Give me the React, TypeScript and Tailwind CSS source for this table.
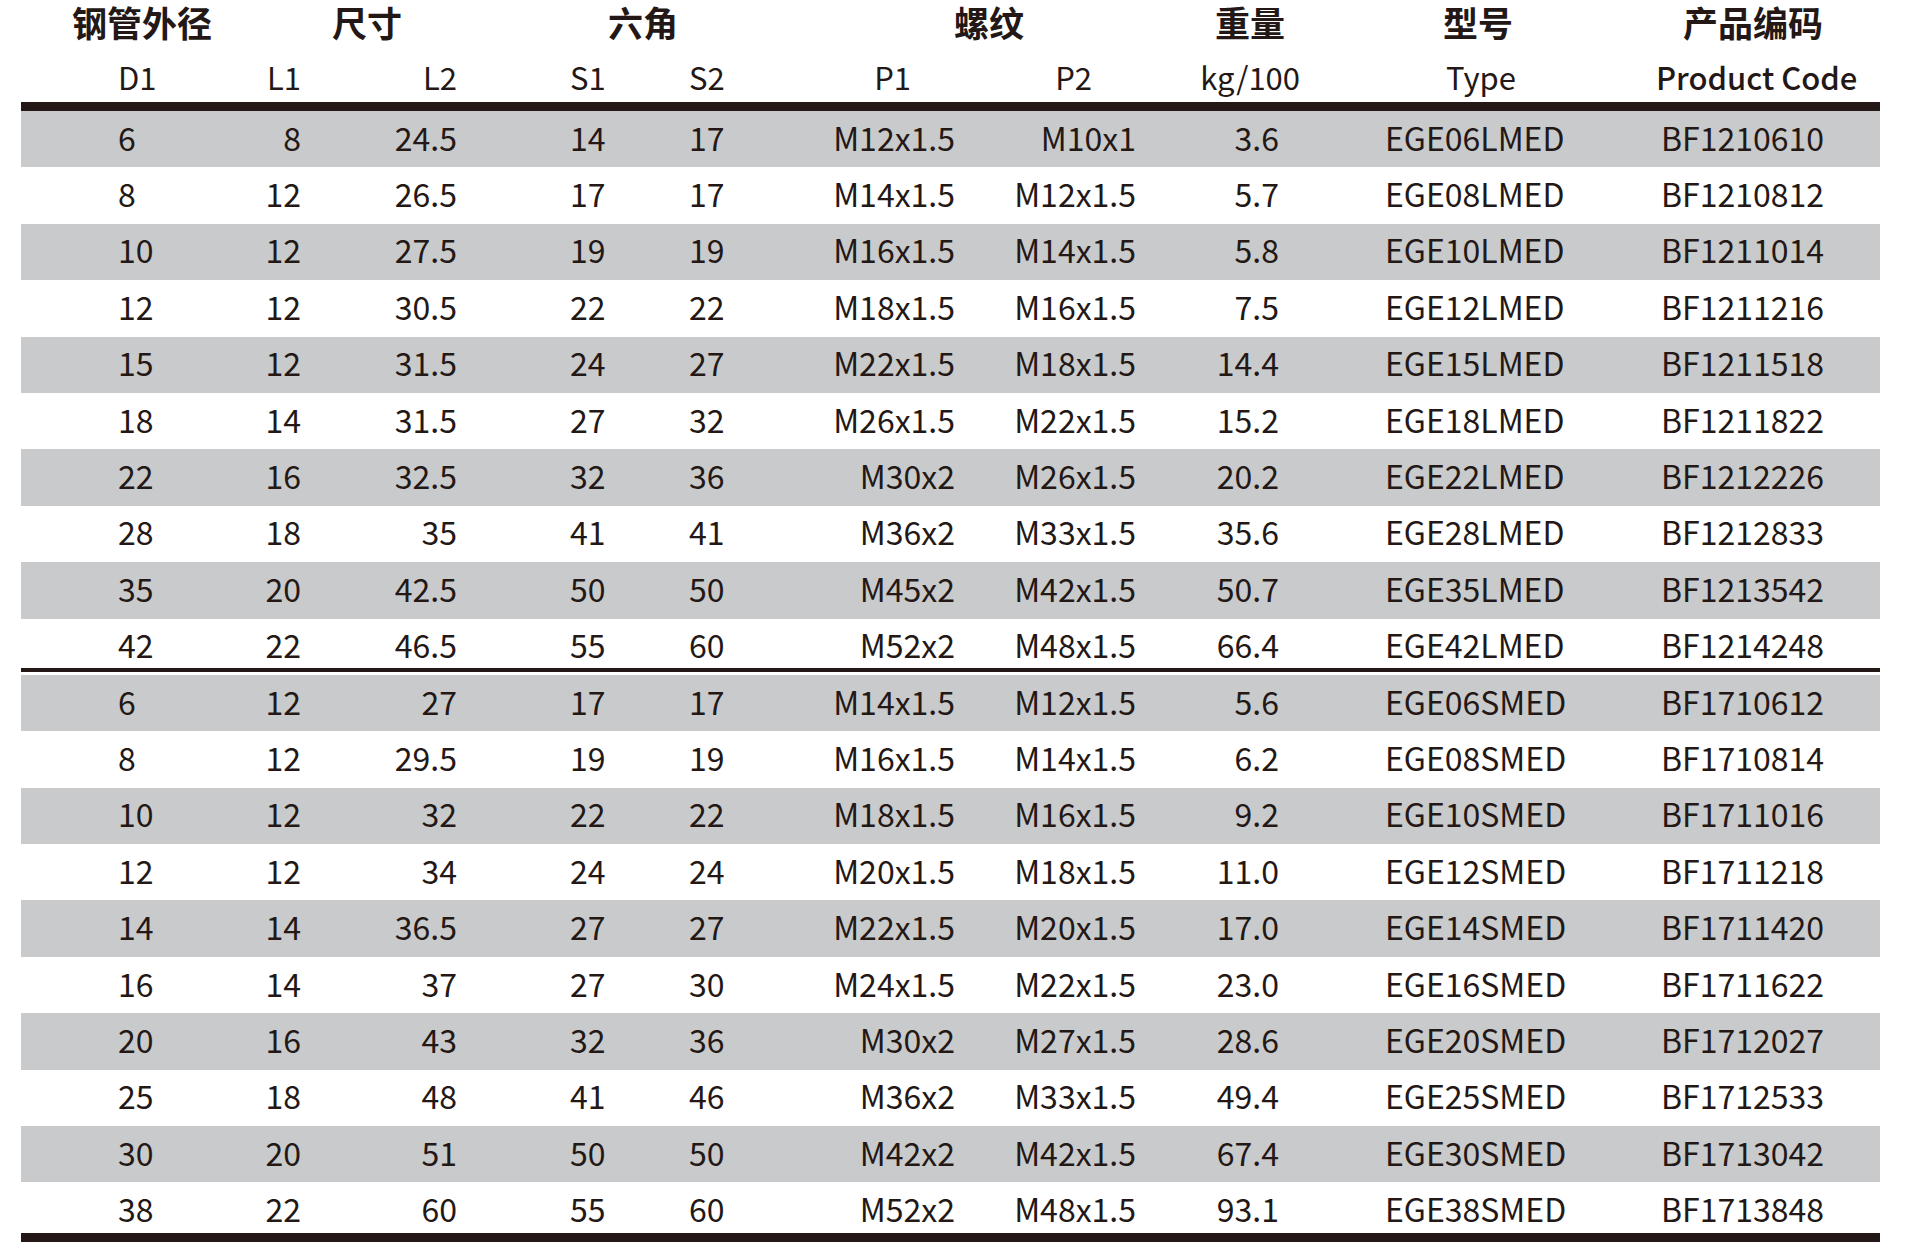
const rowsL = [
  ['6', '8', '24.5', '14', '17', 'M12x1.5', 'M10x1', '3.6', 'EGE06LMED', 'BF1210610'],
  ['8', '12', '26.5', '17', '17', 'M14x1.5', 'M12x1.5', '5.7', 'EGE08LMED', 'BF1210812'],
  ['10', '12', '27.5', '19', '19', 'M16x1.5', 'M14x1.5', '5.8', 'EGE10LMED', 'BF1211014'],
  ['12', '12', '30.5', '22', '22', 'M18x1.5', 'M16x1.5', '7.5', 'EGE12LMED', 'BF1211216'],
  ['15', '12', '31.5', '24', '27', 'M22x1.5', 'M18x1.5', '14.4', 'EGE15LMED', 'BF1211518'],
  ['18', '14', '31.5', '27', '32', 'M26x1.5', 'M22x1.5', '15.2', 'EGE18LMED', 'BF1211822'],
  ['22', '16', '32.5', '32', '36', 'M30x2', 'M26x1.5', '20.2', 'EGE22LMED', 'BF1212226'],
  ['28', '18', '35', '41', '41', 'M36x2', 'M33x1.5', '35.6', 'EGE28LMED', 'BF1212833'],
  ['35', '20', '42.5', '50', '50', 'M45x2', 'M42x1.5', '50.7', 'EGE35LMED', 'BF1213542'],
  ['42', '22', '46.5', '55', '60', 'M52x2', 'M48x1.5', '66.4', 'EGE42LMED', 'BF1214248'],
];

const rowsS = [
  ['6', '12', '27', '17', '17', 'M14x1.5', 'M12x1.5', '5.6', 'EGE06SMED', 'BF1710612'],
  ['8', '12', '29.5', '19', '19', 'M16x1.5', 'M14x1.5', '6.2', 'EGE08SMED', 'BF1710814'],
  ['10', '12', '32', '22', '22', 'M18x1.5', 'M16x1.5', '9.2', 'EGE10SMED', 'BF1711016'],
  ['12', '12', '34', '24', '24', 'M20x1.5', 'M18x1.5', '11.0', 'EGE12SMED', 'BF1711218'],
  ['14', '14', '36.5', '27', '27', 'M22x1.5', 'M20x1.5', '17.0', 'EGE14SMED', 'BF1711420'],
  ['16', '14', '37', '27', '30', 'M24x1.5', 'M22x1.5', '23.0', 'EGE16SMED', 'BF1711622'],
  ['20', '16', '43', '32', '36', 'M30x2', 'M27x1.5', '28.6', 'EGE20SMED', 'BF1712027'],
  ['25', '18', '48', '41', '46', 'M36x2', 'M33x1.5', '49.4', 'EGE25SMED', 'BF1712533'],
  ['30', '20', '51', '50', '50', 'M42x2', 'M42x1.5', '67.4', 'EGE30SMED', 'BF1713042'],
  ['38', '22', '60', '55', '60', 'M52x2', 'M48x1.5', '93.1', 'EGE38SMED', 'BF1713848'],
];

// per-column alignment for the data cells
const cellClass = [
  'pl-[97px] text-left',
  'text-right',
  'text-right',
  'pl-[113px] text-left',
  'text-left',
  'text-right',
  'text-right',
  'pr-[21px] text-right',
  'pl-[85px] text-left',
  'pl-[5px] text-left',
];

const grid =
  'grid grid-cols-[179px_101px_156px_232px_111px_155px_181px_164px_356px_224px]';

function DataRow({ cells, shaded }: { cells: string[]; shaded: boolean }) {
  return (
    <div className={`${grid} h-[56.4px] items-center text-[32px] ${shaded ? 'bg-[#c9cacb]' : 'bg-white'}`}>
      {cells.map((c, i) => (
        <div key={i} className={`${cellClass[i]} pb-[5px] whitespace-nowrap leading-none`}>
          {c}
        </div>
      ))}
    </div>
  );
}

export default function App() {
  return (
    <div
      className="w-[1905px] h-[1250px] bg-white pl-[21px] text-[#231815] text-[31px]"
      style={{ fontFamily: '"Noto Sans CJK SC", "Noto Sans", sans-serif' }}
    >
      <div className="w-[1859px]">
        {/* group headings */}
        <div className={`${grid} h-[48px] items-center pb-[5px] text-[35px] font-bold leading-none whitespace-nowrap`}>
          <div className="pl-[51px]">钢管外径</div>
          <div className="col-span-2 pl-[132px]">尺寸</div>
          <div className="col-span-2 pl-[151px]">六角</div>
          <div className="col-span-2 pl-[154px]">螺纹</div>
          <div className="pl-[79px]">重量</div>
          <div className="pl-[143px]">型号</div>
          <div className="pl-[27px]">产品编码</div>
        </div>

        {/* symbols */}
        <div className={`${grid} h-[54px] items-center pt-[2px] leading-none whitespace-nowrap`}>
          <div className="pl-[97px]">D1</div>
          <div className="text-right">L1</div>
          <div className="text-right">L2</div>
          <div className="pl-[113px]">S1</div>
          <div>S2</div>
          <div className="text-right pr-[44px]">P1</div>
          <div className="text-right pr-[44px]">P2</div>
          <div className="text-right">kg/100</div>
          <div className="pl-[146px]">Type</div>
          <div className="font-medium">Product Code</div>
        </div>

        <div className="h-[9px] bg-[#231815]" />
        {rowsL.map((r, i) => (
          <DataRow key={i} cells={r} shaded={i % 2 === 0} />
        ))}
        {/* divider sits over the bottom of the last L row */}
        <div className="h-[4px] -mt-[7px] mb-[3px] bg-[#231815]" />
        {rowsS.map((r, i) => (
          <DataRow key={i} cells={r} shaded={i % 2 === 0} />
        ))}
        <div className="h-[9px] -mt-[6px] bg-[#231815]" />
      </div>
    </div>
  );
}
